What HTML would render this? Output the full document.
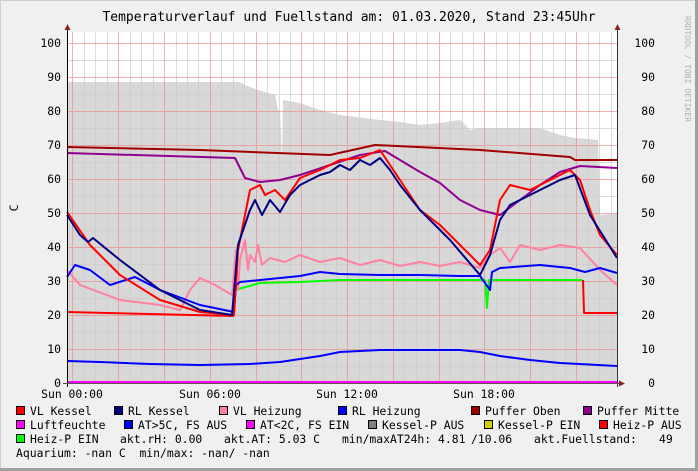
<!DOCTYPE html>
<html><head><meta charset="utf-8"><style>
html,body{margin:0;padding:0;background:#f0f0f0}
svg{display:block}
text{font-family:"DejaVu Sans Mono","Liberation Mono",monospace;font-size:11.4px;fill:#000}
</style></head><body>
<svg width="698" height="471" viewBox="0 0 698 471" xmlns="http://www.w3.org/2000/svg">
<rect x="0" y="0" width="698" height="471" fill="#f0f0f0"/>
<rect x="0.5" y="0.5" width="695" height="468" fill="none" stroke="#cfcfcf" stroke-width="1"/>
<rect x="695" y="0" width="3" height="471" fill="#a0a0a0"/>
<rect x="0" y="468" width="698" height="3" fill="#a0a0a0"/>
<text x="349" y="21" text-anchor="middle" style="font-size:13px">Temperaturverlauf und Fuellstand am: 01.03.2020, Stand 23:45Uhr</text>
<text transform="translate(685,16) rotate(90)" style="font-size:8px;fill:#b0b0b0">RRDTOOL / TOBI OETIKER</text>
<rect x="67" y="32" width="550" height="351" fill="#fff"/>
<path fill="#d8d8d8" d="M67,82 L240,82 245,85 258,90 265,92 275,95 278,110 280,110 282,160 283,100 300,103 320,110 340,115 380,120 400,122 420,125 440,123 460,120 470,130 480,128 500,128 520,128 540,128 560,135 575,138 598,140 600,215 617,213 617,383 67,383Z"/>
<g stroke="#ccc" stroke-width="1" opacity="0.7">
<path d="M67,60.5H617M67,94.5H617M67,128.5H617M67,162.5H617M67,196.5H617M67,230.5H617M67,264.5H617M67,298.5H617M67,332.5H617M67,366.5H617"/>
<path d="M84.5,32V383M95.5,32V383M107.5,32V383M130.5,32V383M141.5,32V383M153.5,32V383M176.5,32V383M187.5,32V383M198.5,32V383M221.5,32V383M233.5,32V383M244.5,32V383M267.5,32V383M279.5,32V383M290.5,32V383M313.5,32V383M324.5,32V383M336.5,32V383M359.5,32V383M370.5,32V383M382.5,32V383M404.5,32V383M416.5,32V383M427.5,32V383M450.5,32V383M462.5,32V383M473.5,32V383M496.5,32V383M507.5,32V383M519.5,32V383M542.5,32V383M553.5,32V383M565.5,32V383M588.5,32V383M599.5,32V383M611.5,32V383"/>
</g>
<g stroke="#f08080" stroke-width="1" opacity="0.6">
<path d="M67,43.5H617M67,77.5H617M67,111.5H617M67,145.5H617M67,179.5H617M67,213.5H617M67,247.5H617M67,281.5H617M67,315.5H617M67,349.5H617"/>
<path d="M72.5,32V383M118.5,32V383M164.5,32V383M210.5,32V383M256.5,32V383M301.5,32V383M347.5,32V383M393.5,32V383M439.5,32V383M484.5,32V383M530.5,32V383M576.5,32V383"/>
</g>
<g fill="none" stroke-width="2" stroke-linejoin="round">
<polyline stroke="#ff0000" points="67,312 150,314 234,316"/>
<polyline stroke="#ff0000" points="583,280 584,313 617,313"/>
<polyline stroke="#0000ff" points="67,361 100,362 150,364 200,365 250,364 280,362 300,359 320,356 340,352 360,351 380,350 420,350 460,350 480,352 500,356 530,360 560,363 617,366"/>
<polyline stroke="#00ff00" points="234,315 235,290 260,283 300,282 340,280 420,280 485,280 487,308 489,280 582,280"/>
<polyline stroke="#ff80a0" points="67,270 80,285 120,300 160,305 180,310 190,290 200,278 215,285 232,295 236,250 238,290 240,260 245,240 248,270 250,255 255,262 258,245 262,265 270,258 285,262 300,255 320,262 340,258 360,265 380,260 400,266 420,262 440,266 460,262 480,268 490,255 500,248 510,262 520,245 540,250 560,245 580,248 600,270 617,285"/>
<polyline stroke="#0000ff" points="67,277 75,265 90,270 110,285 135,277 160,290 200,305 234,312 236,285 240,282 260,280 300,276 320,272 340,274 380,275 420,275 460,276 480,276 490,290 492,272 500,268 540,265 570,268 585,272 600,268 617,273"/>
<polyline stroke="#a00000" points="67,147 200,150 330,155 375,145 480,150 570,157 575,160 617,160"/>
<polyline stroke="#900090" points="67,153 235,158 245,178 260,182 280,180 300,175 330,165 360,155 385,151 400,160 420,172 440,183 460,200 480,210 500,215 520,200 540,185 560,172 580,166 617,168"/>
<polyline stroke="#ff0000" points="67,212 90,245 120,275 160,300 200,312 234,315 238,250 245,215 250,190 260,185 265,195 275,190 285,200 300,178 320,170 340,160 360,158 380,150 400,180 420,210 440,225 460,245 480,265 490,250 500,200 510,185 530,190 550,180 570,170 580,180 590,210 600,235 617,255"/>
<polyline stroke="#000080" points="67,215 80,235 88,242 93,238 120,260 160,290 200,310 232,315 238,245 250,210 255,200 262,215 270,200 280,212 290,195 300,185 310,180 320,175 330,172 340,165 350,170 360,160 370,165 380,158 390,170 400,185 420,210 450,240 480,275 490,255 500,220 510,205 520,200 540,190 560,180 575,175 590,215 617,258"/>
<polyline stroke="#ff00ff" points="67,382 617,382"/>
</g>
<path d="M67.5,28V387" stroke="#000" stroke-width="1"/>
<path d="M617.5,28V387" stroke="#333"/>
<path d="M63,383.5H621" stroke="#555"/>
<path d="M67.5,24l-3,6h6z M617.5,24l-3,6h6z M625,383.5l-6,-3v6z" fill="#902020"/>
<g text-anchor="end">
<text x="61" y="47">100</text><text x="61" y="81">90</text><text x="61" y="115">80</text><text x="61" y="149">70</text><text x="61" y="183">60</text><text x="61" y="217">50</text><text x="61" y="251">40</text><text x="61" y="285">30</text><text x="61" y="319">20</text><text x="61" y="353">10</text><text x="61" y="387">0</text>
<text x="655" y="47">100</text><text x="655" y="81">90</text><text x="655" y="115">80</text><text x="655" y="149">70</text><text x="655" y="183">60</text><text x="655" y="217">50</text><text x="655" y="251">40</text><text x="655" y="285">30</text><text x="655" y="319">20</text><text x="655" y="353">10</text><text x="655" y="387">0</text>
</g>
<text transform="translate(18,208) rotate(-90)" text-anchor="middle">C</text>
<g text-anchor="middle">
<text x="72" y="398">Sun 00:00</text><text x="210" y="398">Sun 06:00</text><text x="347" y="398">Sun 12:00</text><text x="484" y="398">Sun 18:00</text>
</g>
<g stroke="#000" stroke-width="1">
<rect x="16.5" y="406.5" width="8" height="8" fill="#ff0000"/>
<rect x="114.5" y="406.5" width="8" height="8" fill="#000080"/>
<rect x="219.5" y="406.5" width="8" height="8" fill="#ff80a0"/>
<rect x="338.5" y="406.5" width="8" height="8" fill="#0000ff"/>
<rect x="471.5" y="406.5" width="8" height="8" fill="#a00000"/>
<rect x="583.5" y="406.5" width="8" height="8" fill="#900090"/>
<rect x="16.5" y="420.5" width="8" height="8" fill="#ff00ff"/>
<rect x="124.5" y="420.5" width="8" height="8" fill="#0000ff"/>
<rect x="246.5" y="420.5" width="8" height="8" fill="#ff00ff"/>
<rect x="368.5" y="420.5" width="8" height="8" fill="#808080"/>
<rect x="484.5" y="420.5" width="8" height="8" fill="#d0d000"/>
<rect x="599.5" y="420.5" width="8" height="8" fill="#ff0000"/>
<rect x="16.5" y="434.5" width="8" height="8" fill="#00ff00"/>
</g>
<text x="30" y="415">VL Kessel</text><text x="128" y="415">RL Kessel</text><text x="233" y="415">VL Heizung</text><text x="352" y="415">RL Heizung</text><text x="485" y="415">Puffer Oben</text><text x="597" y="415">Puffer Mitte</text>
<text x="30" y="429">Luftfeuchte</text><text x="138" y="429">AT&gt;5C, FS AUS</text><text x="260" y="429">AT&lt;2C, FS EIN</text><text x="382" y="429">Kessel-P AUS</text><text x="498" y="429">Kessel-P EIN</text><text x="613" y="429">Heiz-P AUS</text>
<text x="30" y="443">Heiz-P EIN</text><text x="120" y="443">akt.rH: 0.00</text><text x="224" y="443">akt.AT: 5.03 C</text><text x="342" y="443">min/maxAT24h: 4.81</text><text x="471" y="443">/10.06</text><text x="534" y="443">akt.Fuellstand:</text><text x="659" y="443">49</text>
<text x="16" y="457" xml:space="preserve">Aquarium: -nan C  min/max: -nan/ -nan</text>
</svg>
</body></html>
